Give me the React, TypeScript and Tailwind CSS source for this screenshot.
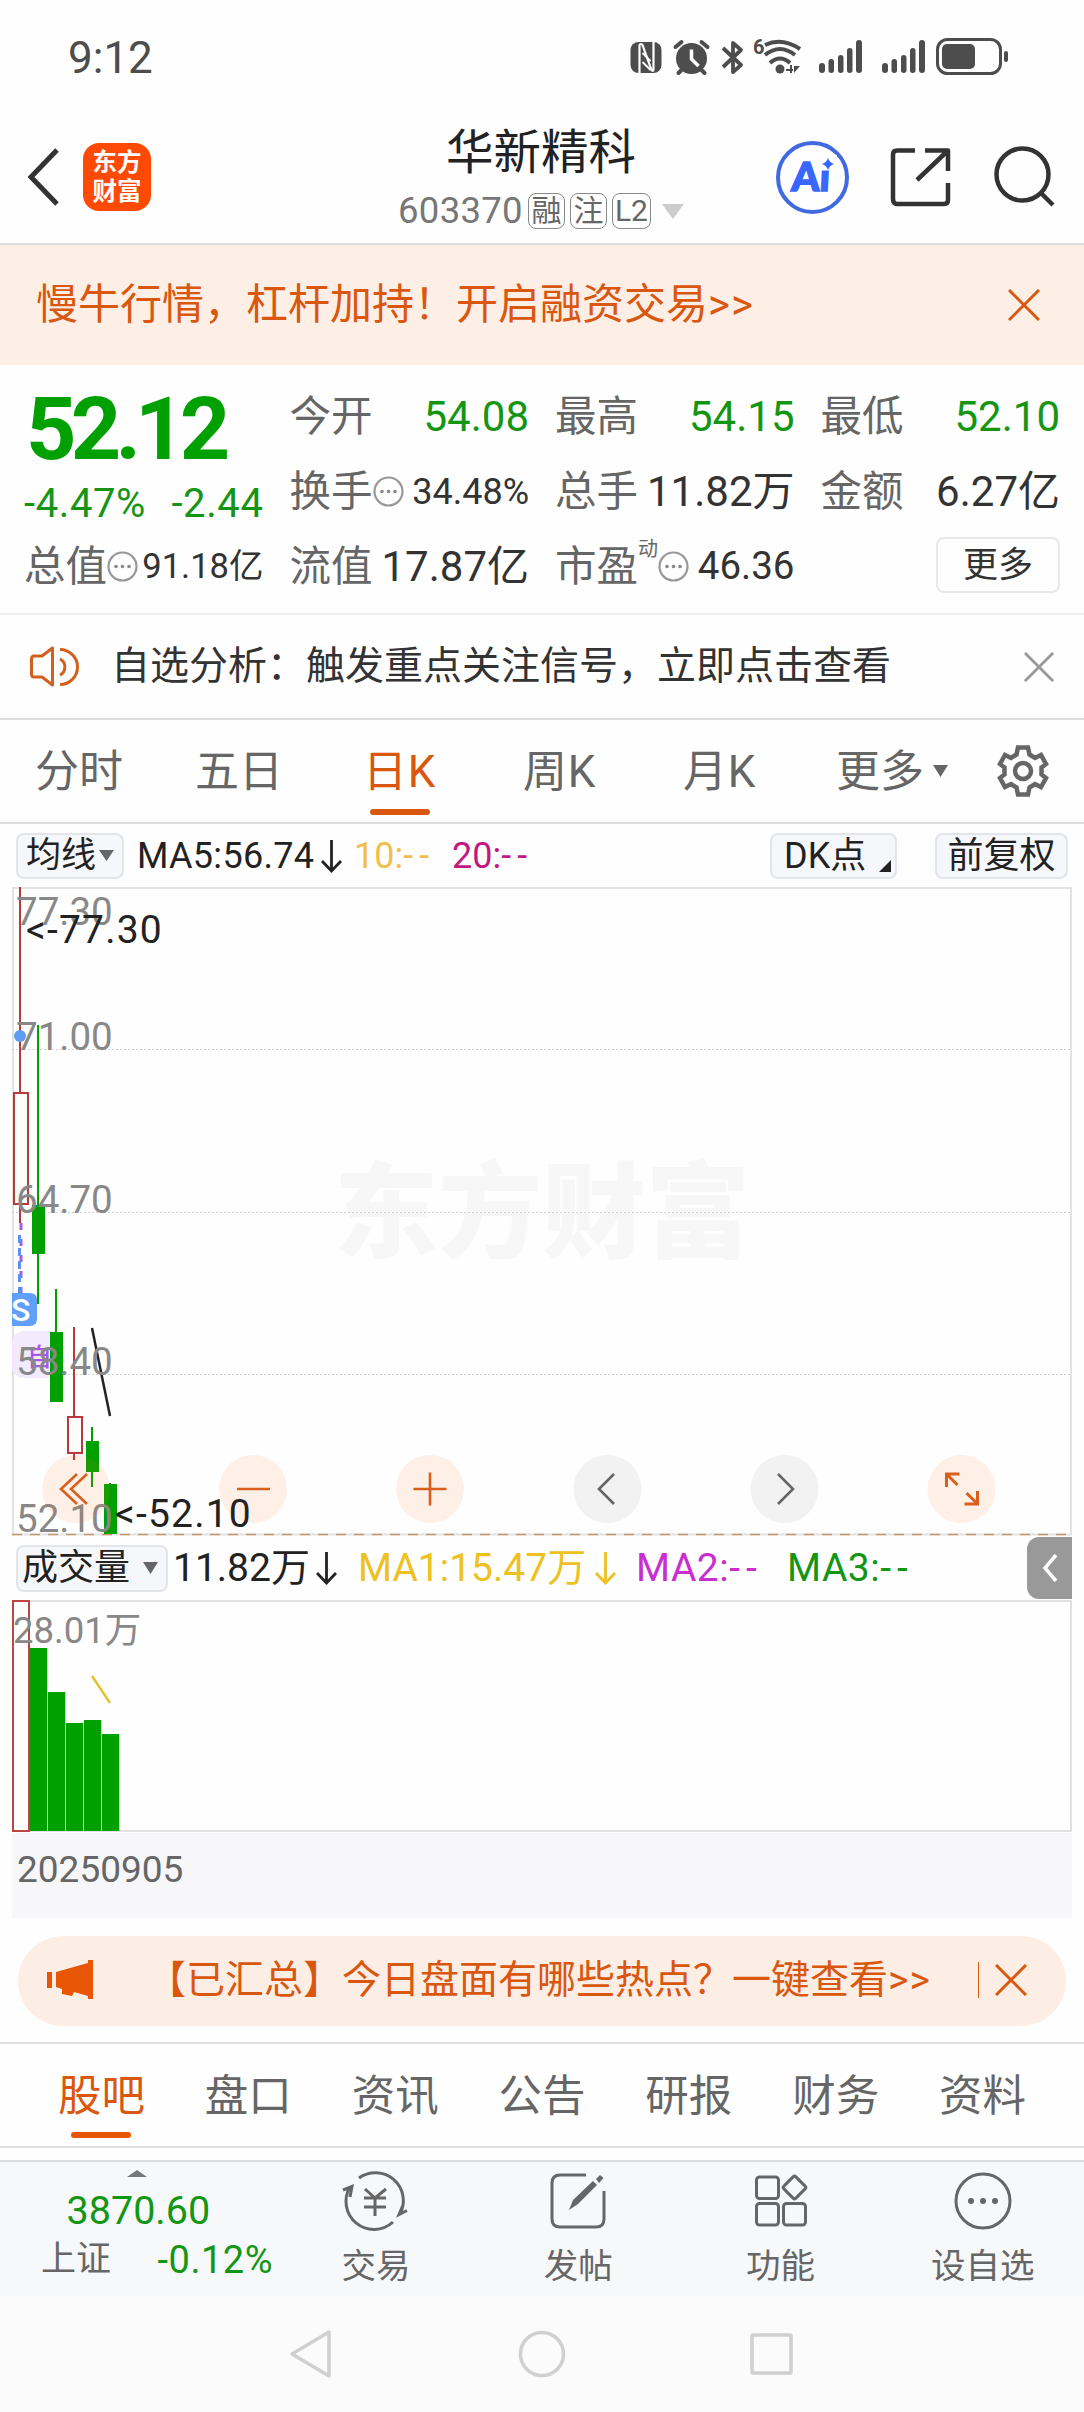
import type { ReactNode } from "react";
import clsx from "clsx";

const priceLabels = [
  { text: "77.30", y: 38 },
  { text: "71.00", y: 163 },
  { text: "64.70", y: 326 },
  { text: "58.40", y: 488 },
  { text: "52.10", y: 645 },
];

const candles = [
  { x: 8, high: 0, low: 336, top: 206, bottom: 317, up: true },
  { x: 26, high: 138, low: 417, top: 318, bottom: 367, up: false },
  { x: 44, high: 402, low: 515, top: 445, bottom: 515, up: false },
  { x: 62, high: 440, low: 573, top: 530, bottom: 566, up: true },
  { x: 80, high: 540, low: 600, top: 554, bottom: 585, up: false },
  { x: 98, high: 596, low: 647, top: 597, bottom: 647, up: false },
];

const volumes = [
  { x: 18, top: 48 },
  { x: 36, top: 92 },
  { x: 54, top: 123 },
  { x: 72, top: 120 },
  { x: 90, top: 134 },
];

const newsTabs = ["股吧", "盘口", "资讯", "公告", "研报", "财务", "资料"];

function StatusBar() {
  return (
    <div className="flex h-[110px] items-center pl-[68px] pr-[76px] pt-1 text-[#4d4d4d]">
      <span className="pt-[1px] text-[44px] leading-none">9:12</span>
      <svg className="ml-auto" width="380" height="44" viewBox="630 34 380 44" fill="currentColor">
        {/* NFC */}
        <g transform="translate(1.500 0)">
          <rect x="631" y="41" width="31" height="31" rx="8" />
          <path d="M640 72V44Q641 42 643 44L652 69Q654 71 654 68V41" fill="none" stroke="#fff" strokeWidth="2.200" />
          <path d="M643 52L651 60M643 61L651 69" stroke="#fff" strokeWidth="1.800" />
        </g>
        {/* alarm */}
        <g transform="translate(1.500 0)">
          <circle cx="692" cy="57.500" r="15.500" />
          <path d="M676 46L682 41M708 46L702 41M679 72L684 67M705 72L700 67" stroke="currentColor" strokeWidth="4" strokeLinecap="round" />
          <path d="M692 48.500V58L699 65" fill="none" stroke="#fff" strokeWidth="3.500" />
        </g>
        {/* bluetooth */}
        <path d="M725 47L743 64L735 71V42L743 49L725 66" fill="none" stroke="currentColor" strokeWidth="3.800" strokeLinejoin="round" />
        {/* wifi */}
        <text x="755" y="53" fontSize="20" fontWeight="700">6</text>
        <g fill="none" stroke="currentColor" strokeWidth="4">
          <path d="M767 44Q784 36 802 48" />
          <path d="M767 54Q782 42 797 54" />
          <path d="M772 62Q782 53 792 62" />
        </g>
        <circle cx="782" cy="68" r="4.500" />
        <path d="M793 64V72M788 69H795" fill="none" stroke="currentColor" strokeWidth="2" />
        <path d="M796 65H802L796 72Z" />
        {/* signal bars */}
        {[821, 884].map((x) => (
          <g key={x}>
            <rect x={x} y="62" width="6" height="10" rx="3" />
            <rect x={x + 9.500} y="58" width="5.500" height="14" rx="2.700" />
            <rect x={x + 19} y="54" width="5.500" height="18" rx="2.700" />
            <rect x={x + 28} y="47" width="5.500" height="25" rx="2.700" />
            <rect x={x + 37} y="39" width="6" height="33" rx="3" />
          </g>
        ))}
        {/* battery */}
        <rect x="939.500" y="38.500" width="63" height="34" rx="10" fill="none" stroke="currentColor" strokeWidth="3" />
        <rect x="944" y="43" width="33" height="25" rx="5" />
        <rect x="1006" y="50" width="4" height="11" rx="2" />
      </svg>
    </div>
  );
}

function Badge({ children }: { children: ReactNode }) {
  return (
    <span className="flex h-[36px] min-w-[37px] items-center justify-center rounded-[8px] border border-[#8a8a8a] px-[2px] text-[30px] leading-none text-[#666]">
      {children}
    </span>
  );
}

function Header() {
  return (
    <div className="flex h-[135px] border-b-2 border-[#dcdcdc]">
      <div className="flex w-[380px] items-center pl-[26px]">
        <svg width="34" height="60" viewBox="0 0 34 60" fill="none" stroke="#333" strokeWidth="5">
          <path d="M31 3L5 30L31 57" />
        </svg>
        <div className="ml-[23px] flex h-[68px] w-[68px] flex-col items-center justify-center rounded-[16px] bg-[#ff4a05] text-[24.500px] font-bold leading-[29px] text-white">
          <span>东方</span>
          <span>财富</span>
        </div>
      </div>
      <div className="flex w-[320px] flex-col items-center pt-[18px]">
        <h1 className="pl-[2px] text-[47.500px] leading-[50px] text-[#222]">华新精科</h1>
        <div className="mt-[15px] flex items-center gap-[5px] pl-[2px]">
          <span className="text-[36.500px] leading-none tracking-[0.300px] text-[#777]">603370</span>
          <Badge>融</Badge>
          <Badge>注</Badge>
          <Badge>L2</Badge>
          <svg className="ml-[6px]" width="22" height="15" fill="#ccc">
            <path d="M0 0H22L11 15Z" />
          </svg>
        </div>
      </div>
      <svg className="ml-[70px] mt-[24px]" width="300" height="84" viewBox="770 134 300 84" fill="none" stroke="#333" strokeWidth="4.500">
        <circle cx="812.500" cy="177.500" r="34.500" stroke="#4169e1" strokeWidth="4" />
        <g transform="translate(791 191) skewX(-3)">
          <text fontSize="40" fontWeight="900" fill="#3866ff" stroke="#3866ff" strokeWidth="1.500" fontFamily="Lato, sans-serif">
            Ai
          </text>
        </g>
        <rect x="819" y="155" width="18" height="15.500" fill="#fff" stroke="none" />
        <path d="M828 158Q829.500 162.500 834 164Q829.500 165.500 828 170Q826.500 165.500 822 164Q826.500 162.500 828 158Z" fill="#3866ff" stroke="none" />
        <path d="M915 150.500H897Q893 150.500 893 154.500V199Q893 204 897 204H944Q948 204 948 200V183M925 150.500H948V171M948 150.500L917 180" strokeLinejoin="round" />
        <circle cx="1022.500" cy="174.500" r="26" />
        <path d="M1041 193L1053 205" />
      </svg>
    </div>
  );
}

function Cross({ size, className }: { size: number; className: string }) {
  return (
    <svg className={className} width={size} height={size} viewBox="0 0 32 32" fill="none" stroke="currentColor" strokeWidth="3">
      <path d="M1 1L31 31M31 1L1 31" />
    </svg>
  );
}

function Dots() {
  return (
    <svg width="31" height="31" viewBox="0 0 31 31" fill="#888">
      <circle cx="15.500" cy="15.500" r="14" fill="none" stroke="#999" strokeWidth="2.200" />
      <circle cx="9" cy="15.500" r="1.800" />
      <circle cx="15.500" cy="15.500" r="1.800" />
      <circle cx="22" cy="15.500" r="1.800" />
    </svg>
  );
}

interface StatProps {
  label: string;
  value: string;
  valueClass: string;
  sup?: string;
  info?: boolean;
}

function Stat({ label, value, valueClass, sup, info }: StatProps) {
  return (
    <div className="flex h-[75px] items-center whitespace-nowrap leading-none">
      <span className="text-[41.500px] text-[#666]">{label}</span>
      {sup && <span className="-mt-[36px] text-[20px] text-[#666]">{sup}</span>}
      {info && <Dots />}
      <span className={clsx("ml-auto", valueClass)}>{value}</span>
    </div>
  );
}

function Quote() {
  return (
    <div className="grid h-[250px] grid-cols-4 gap-x-[26px] border-b-2 border-[#eee] pl-[24px] pr-[24px] pt-[14px]">
      <div>
        <div className="flex h-[98px] items-center pl-[2px] pt-[2px] text-[88px] font-bold leading-none tracking-[-5.800px] text-[#00a000]">
          52.12
        </div>
        <div className="flex h-[52px] items-center justify-between pt-[2px] text-[40px] leading-none text-[#149614]">
          <span className="tracking-[0.600px]">-4.47%</span>
          <span className="tracking-[0.600px]">-2.44</span>
        </div>
        <Stat label="总值" value="91.18亿" info valueClass="text-[34.500px] text-[#333]" />
      </div>
      <div>
        <Stat label="今开" value="54.08" valueClass="text-[42px] text-[#149614]" />
        <Stat label="换手" value="34.48%" info valueClass="text-[36px] text-[#333]" />
        <Stat label="流值" value="17.87亿" valueClass="text-[42px] text-[#333]" />
      </div>
      <div>
        <Stat label="最高" value="54.15" valueClass="text-[42px] text-[#149614]" />
        <Stat label="总手" value="11.82万" valueClass="text-[42px] text-[#333]" />
        <Stat label="市盈" sup="动" info value="46.36" valueClass="text-[38.500px] text-[#333]" />
      </div>
      <div>
        <Stat label="最低" value="52.10" valueClass="text-[42px] text-[#149614]" />
        <Stat label="金额" value="6.27亿" valueClass="text-[42px] text-[#333]" />
        <div className="flex h-[75px] items-center justify-end pb-[3px]">
          <button className="h-[56px] w-[124px] rounded-[8px] border-2 border-[#e8e8e8] text-[35px] leading-none text-[#333]">
            更多
          </button>
        </div>
      </div>
    </div>
  );
}

function Notice() {
  return (
    <div className="flex h-[105px] items-center border-b-2 border-[#ddd] pl-[28px] pr-[30px]">
      <svg width="56" height="46" viewBox="0 0 56 46" fill="none" stroke="#d35f1e" strokeWidth="3">
        <path d="M24.500 4V41L14 33H6Q3.500 33 3.500 30V15Q3.500 12 6 12H14L24.500 4Z" strokeLinejoin="round" />
        <path d="M32 5.500A17.500 17.500 0 0 1 32 40.500M32 15A9 9 0 0 1 32 31" />
      </svg>
      <span className="ml-[27px] whitespace-nowrap text-[39px] leading-none text-[#333]">
        自选分析：触发重点关注信号，立即点击查看
      </span>
      <Cross size={30} className="ml-auto text-[#999]" />
    </div>
  );
}

function PeriodTabs() {
  return (
    <div className="flex h-[104px] items-center border-b-2 border-[#ddd] text-[44px] leading-none text-[#666]">
      <span className="ml-[35px] mt-[2px] w-[160px]">分时</span>
      <span className="mt-[2px] w-[168px]">五日</span>
      <span className="relative mt-[2px] w-[160px] tracking-[0.800px] text-[#d9570f]">
        日K
        <i className="absolute -bottom-[21px] left-[7px] h-[6px] w-[60px] rounded-full bg-[#d9570f]" />
      </span>
      <span className="mt-[2px] w-[160px] tracking-[0.800px]">周K</span>
      <span className="mt-[2px] w-[153px] tracking-[0.800px]">月K</span>
      <span className="mt-[2px] w-[97px]">更多</span>
      <svg width="16" height="12" fill="#666">
        <path d="M0 0H15L7.500 12Z" />
      </svg>
      <svg className="ml-[48px]" width="52" height="54" viewBox="-26 -27 52 54" fill="none" stroke="#666" strokeWidth="4.500">
        <path d="M-5 -23.500H5L6.500 -16.500L12 -13L18 -16L23 -7L18.500 -3.500V3.500L23 7L18 16L12 13L6.500 16.500L5 23.500H-5L-6.500 16.500L-12 13L-18 16L-23 7L-18.500 3.500V-3.500L-23 -7L-18 -16L-12 -13L-6.500 -16.500Z" />
        <circle r="8" />
      </svg>
    </div>
  );
}

function DownArrow({ className }: { className?: string }) {
  return (
    <svg className={className} width="21" height="34" viewBox="0 0 21 34" fill="none" stroke="currentColor" strokeWidth="2.800">
      <path d="M10.500 1V31M1 22L10.500 32L20 22" />
    </svg>
  );
}

function AverageBar() {
  return (
    <div className="flex h-[63px] items-center whitespace-nowrap pl-[16px] pr-[16px] text-[36px] leading-none text-[#222]">
      <button className="flex h-[46px] w-[108px] items-center rounded-[8px] border-2 border-[#e3e5ea] bg-[#f6f7fa] pl-[8px] leading-none">
        <span className="text-[35px]">均线</span>
        <svg className="ml-[3px]" width="15" height="11" fill="#666">
          <path d="M0 0H15L7.500 11Z" />
        </svg>
      </button>
      <span className="ml-[13px] w-[184px] tracking-[0.300px]">MA5:56.74</span>
      <DownArrow />
      <span className="ml-[12px] w-[98px] text-[#f0bf4c]">
        10:<span className="tracking-[6px]">--</span>
      </span>
      <span className="text-[#c01a80]">
        20:<span className="tracking-[6px]">--</span>
      </span>
      <button className="ml-auto flex h-[46px] w-[127px] items-center rounded-[8px] border-2 border-[#e3e5ea] bg-[#f6f7fa] pl-[12px] leading-none">
        DK点
        <svg className="ml-auto mr-[4px] mt-[20px]" width="12" height="12" fill="#222">
          <path d="M12 0V12H0Z" />
        </svg>
      </button>
      <button className="ml-[38px] h-[46px] w-[133px] rounded-[8px] border-2 border-[#e3e5ea] bg-[#f6f7fa] leading-none">
        前复权
      </button>
    </div>
  );
}

function CandleChart() {
  return (
    <svg className="ml-[12px] block" width="1060" height="649" viewBox="0 0 1060 649">
      <text x="322" y="363" fontSize="104" fontWeight="900" fill="#f7f7f7">东方财富</text>
      <path d="M1 648V1H1059V648" fill="none" stroke="#e2e2e2" strokeWidth="2" />
      <path d="M0 162.500H1060M0 325.500H1060M0 487.500H1060" stroke="#d2d2d2" strokeDasharray="2 2" />
      <path d="M0 647.500H1060" stroke="#e2e2e2" strokeWidth="2" />
      <path d="M0 647.500H1060" stroke="#c09a6a" strokeWidth="1.500" strokeDasharray="10 8" />

      {/* self-selected marker */}
      <rect x="0" y="444" width="52" height="47" rx="12" fill="#f3eafd" />
      <text x="15" y="479" fontSize="25" fontWeight="500" fill="#a955f0">自</text>

      {candles.map((c) => {
        const color = c.up ? "#b83a3a" : "#00a000";
        return (
          <g key={c.x}>
            <path d={`M${c.x} ${c.high}V${c.top}M${c.x} ${c.bottom}V${c.low}`} stroke={color} strokeWidth="2" />
            <rect
              x={c.x - 6}
              y={c.top}
              width={c.up ? 14 : 13}
              height={c.bottom - c.top}
              fill={c.up ? "none" : color}
              stroke={c.up ? color : "none"}
              strokeWidth="2"
            />
          </g>
        );
      })}

      <circle cx="8" cy="149" r="6" fill="#5f9cf5" />
      <path d="M9 336V408" stroke="#a55cf0" strokeWidth="3" strokeDasharray="7 9" />
      <path d="M7.500 348V408" stroke="#5f8ff2" strokeWidth="3" strokeDasharray="8 5" />
      <path d="M0 406H18Q25 406 25 413V432Q25 439 18 439H0Z" fill="#60a0fa" />
      <text x="-1" y="434" fontSize="32" fontWeight="500" fill="#fff">S</text>

      <path d="M80 441L98 529" stroke="#222" strokeWidth="2.500" />

      <g fontSize="38.500" fill="#888">
        {priceLabels.map((p) => (
          <text key={p.text} x="4" y={p.y}>{p.text}</text>
        ))}
      </g>

      {/* zoom and pan buttons */}
      <g strokeWidth="2.600" fill="none" stroke="#d9601c">
        <g stroke="none" fill="#ff6a1a" fillOpacity="0.1">
          <circle cx="64" cy="602" r="34" />
          <circle cx="241" cy="602" r="34" />
          <circle cx="418" cy="602" r="34" />
          <circle cx="949.500" cy="602" r="34" />
        </g>
        <g stroke="none" fill="#f2f2f2">
          <circle cx="595.500" cy="602" r="34" />
          <circle cx="772.500" cy="602" r="34" />
        </g>
        <path d="M65 587L49 602L65 617M75 587L59 602L75 617" />
        <path d="M225 602H258M401.500 602H434.500M418 585.500V618.500" />
        <path d="M602 587L587 602L602 617M766 587L781 602L766 617" stroke="#666" />
        <path d="M934.500 600V587H947.500M934.500 587L945.500 598M965.500 604V617H952.500M965.500 617L954.500 606" strokeWidth="3" />
      </g>

      <g fontSize="39" fill="#222" letterSpacing="1.200">
        <text x="14" y="56">&lt;-77.30</text>
        <text x="103" y="640">&lt;-52.10</text>
      </g>
    </svg>
  );
}

function VolumeBar() {
  return (
    <div className="flex h-[64px] items-center whitespace-nowrap pl-[16px] pr-[12px] text-[39px] leading-none text-[#222]">
      <button className="flex h-[47px] w-[152px] items-center rounded-[8px] border-2 border-[#e3e5ea] bg-[#f6f7fa] pl-[4px] text-[36px] leading-none">
        成交量
        <svg className="ml-[13px]" width="15" height="12" fill="#666">
          <path d="M0 0H15L7.500 12Z" />
        </svg>
      </button>
      <span className="ml-[5px] w-[143px]">11.82万</span>
      <DownArrow />
      <span className="ml-[21px] w-[237px] text-[#edc11f]">MA1:15.47万</span>
      <DownArrow className="text-[#edc11f]" />
      <span className="ml-[20px] w-[151px] tracking-[0.500px] text-[#c92fd0]">
        MA2:<span className="tracking-[6px]">--</span>
      </span>
      <span className="tracking-[0.500px] text-[#149614]">
        MA3:<span className="tracking-[6px]">--</span>
      </span>
      <button className="ml-auto flex h-[62px] w-[45px] items-center justify-center rounded-l-[12px] bg-[#999]">
        <svg width="16" height="28" viewBox="0 0 16 28" fill="none" stroke="#fff" strokeWidth="3.500">
          <path d="M14 1L3 14L14 27" />
        </svg>
      </button>
    </div>
  );
}

function VolumeChart() {
  return (
    <>
      <svg className="ml-[12px] block" width="1060" height="233" viewBox="0 0 1060 233">
        <path d="M1 1H1059V231H1Z" fill="none" stroke="#e2e2e2" strokeWidth="2" />
        <rect x="1" y="1" width="16" height="230" fill="#fff" stroke="#c04444" strokeWidth="2" />
        {volumes.map((v) => (
          <rect key={v.x} x={v.x} y={v.top} width="17.300" height={231 - v.top} fill="#00a000" />
        ))}
        <path d="M80 76L98 103" stroke="#e8c22e" strokeWidth="2.500" />
        <text x="1" y="43" fontSize="36.500" fill="#888">28.01万</text>
      </svg>
      <div className="ml-[12px] flex h-[85px] w-[1060px] items-center bg-[#f7f7fa] pb-[12px] pl-[5px] text-[37px] leading-none text-[#666]">
        20250905
      </div>
    </>
  );
}

function Promo() {
  return (
    <div className="mx-[18px] mt-[18px] flex h-[90px] items-center rounded-full bg-[#fdeee5] pb-[2px] text-[#d9570f]">
      <svg className="ml-[29px]" width="46" height="40" fill="#e85504">
        <path d="M0 12H5V28H0ZM9 12L41 3V0H46V39H41V36L27 32L25 36L15 34V29L9 27Z" />
      </svg>
      <span className="ml-[54px] whitespace-nowrap text-[39px] leading-none">
        【已汇总】今日盘面有哪些热点？一键查看<span className="tracking-[1px]">&gt;&gt;</span>
      </span>
      <i className="ml-auto h-[36px] w-px bg-[#d9570f]" />
      <Cross size={32} className="ml-[16px] mr-[39px]" />
    </div>
  );
}

function NewsTabs() {
  return (
    <div className="mt-[16px] flex h-[106px] border-b-2 border-t-2 border-[#ddd] px-[28px] text-[43.500px] leading-none text-[#666]">
      {newsTabs.map((tab, i) => (
        <div
          key={tab}
          className={clsx("relative flex flex-1 items-center justify-center pt-[3px]", i === 0 && "text-[#d9570f]")}
        >
          {tab}
          {i === 0 && <i className="absolute bottom-[8px] h-[6px] w-[60px] rounded-full bg-[#e85504]" />}
        </div>
      ))}
    </div>
  );
}

function ActionItem({ label, children }: { label: string; children: ReactNode }) {
  return (
    <div className="flex w-[202.500px] flex-col items-center pt-[8px]">
      <svg width="68" height="62" viewBox="-34 -31 68 62" fill="none" stroke="#666" strokeWidth="3">
        {children}
      </svg>
      <span className="mt-[17px] text-[34.500px] leading-none text-[#666]">{label}</span>
    </div>
  );
}

function BottomBar() {
  return (
    <div className="mt-[12px] flex h-[136px] border-t-2 border-[#ddd] bg-[#f6f8fa]">
      <div className="flex w-[275px] flex-col items-center">
        <svg className="mt-[8px]" width="20" height="7" fill="#777">
          <path d="M0 7L10 0L20 7Z" />
        </svg>
        <span className="mt-[14px] pl-[2px] text-[39.500px] leading-none text-[#149614]">3870.60</span>
        <div className="ml-[41px] mt-[10px] flex w-[232px] items-center justify-between self-start leading-none">
          <span className="text-[35px] text-[#666]">上证</span>
          <span className="text-[38px] tracking-[0.500px] text-[#149614]">-0.12%</span>
        </div>
      </div>
      <ActionItem label="交易">
        <path d="M-17 -23A28 28 0 0 1 24 13M17 21A28 28 0 0 1 -26 -14M-33 -11L-24 -14.500L-26 -4M31 9.500L23 13.500L27 4" />
        <path d="M-11 -12L-1 -3L10 -12M-12 -3H10M-12 6H10M-1 -3V15" />
      </ActionItem>
      <ActionItem label="发帖">
        <path d="M8 -26H-18Q-26 -26 -26 -18V18Q-26 26 -18 26H18Q26 26 26 18V-10" />
        <path d="M-9 9L-5 -1L15 -20L19 -16L0 3ZM18 -22L22 -26L25.500 -23L21 -18Z" fill="#666" stroke="none" />
      </ActionItem>
      <ActionItem label="功能">
        <rect x="-24.500" y="-24" width="22" height="21.500" rx="3" />
        <rect x="-24.500" y="2.500" width="22" height="21.500" rx="3" />
        <rect x="2.500" y="2.500" width="22" height="21.500" rx="3" />
        <rect x="5" y="-22" width="17" height="17" rx="2" transform="rotate(45 13.500 -13.500)" />
      </ActionItem>
      <ActionItem label="设自选">
        <circle r="27" />
        <g fill="#666" stroke="none">
          <circle cx="-12" r="3" />
          <circle r="3" />
          <circle cx="12" r="3" />
        </g>
      </ActionItem>
    </div>
  );
}

function SystemNav() {
  return (
    <div className="flex h-[116px] items-center bg-[#fbfbfb] pl-[288px]">
      <svg width="508" height="50" viewBox="288 2329 508 50" fill="none" stroke="#d0d0d0" strokeWidth="3.500" strokeLinejoin="round">
        <path d="M329 2332V2376L292 2354Z" />
        <circle cx="542" cy="2354" r="21.500" />
        <rect x="752" y="2335" width="39" height="38" rx="1" />
      </svg>
    </div>
  );
}

export default function App() {
  return (
    <div className="h-[2412px] w-[1084px] overflow-hidden bg-[#fefefe] font-[Roboto,'Noto_Sans_CJK_SC',sans-serif]">
      <StatusBar />
      <Header />
      <div className="flex h-[120px] items-center bg-[#fdeee6] pl-[36px] pr-[44px] text-[#d9570f]">
        <span className="whitespace-nowrap text-[42px] leading-none">
          慢牛行情，杠杆加持！开启融资交易<span className="tracking-[1px]">&gt;&gt;</span>
        </span>
        <Cross size={32} className="ml-auto" />
      </div>
      <Quote />
      <Notice />
      <PeriodTabs />
      <AverageBar />
      <CandleChart />
      <VolumeBar />
      <VolumeChart />
      <Promo />
      <NewsTabs />
      <BottomBar />
      <SystemNav />
    </div>
  );
}
